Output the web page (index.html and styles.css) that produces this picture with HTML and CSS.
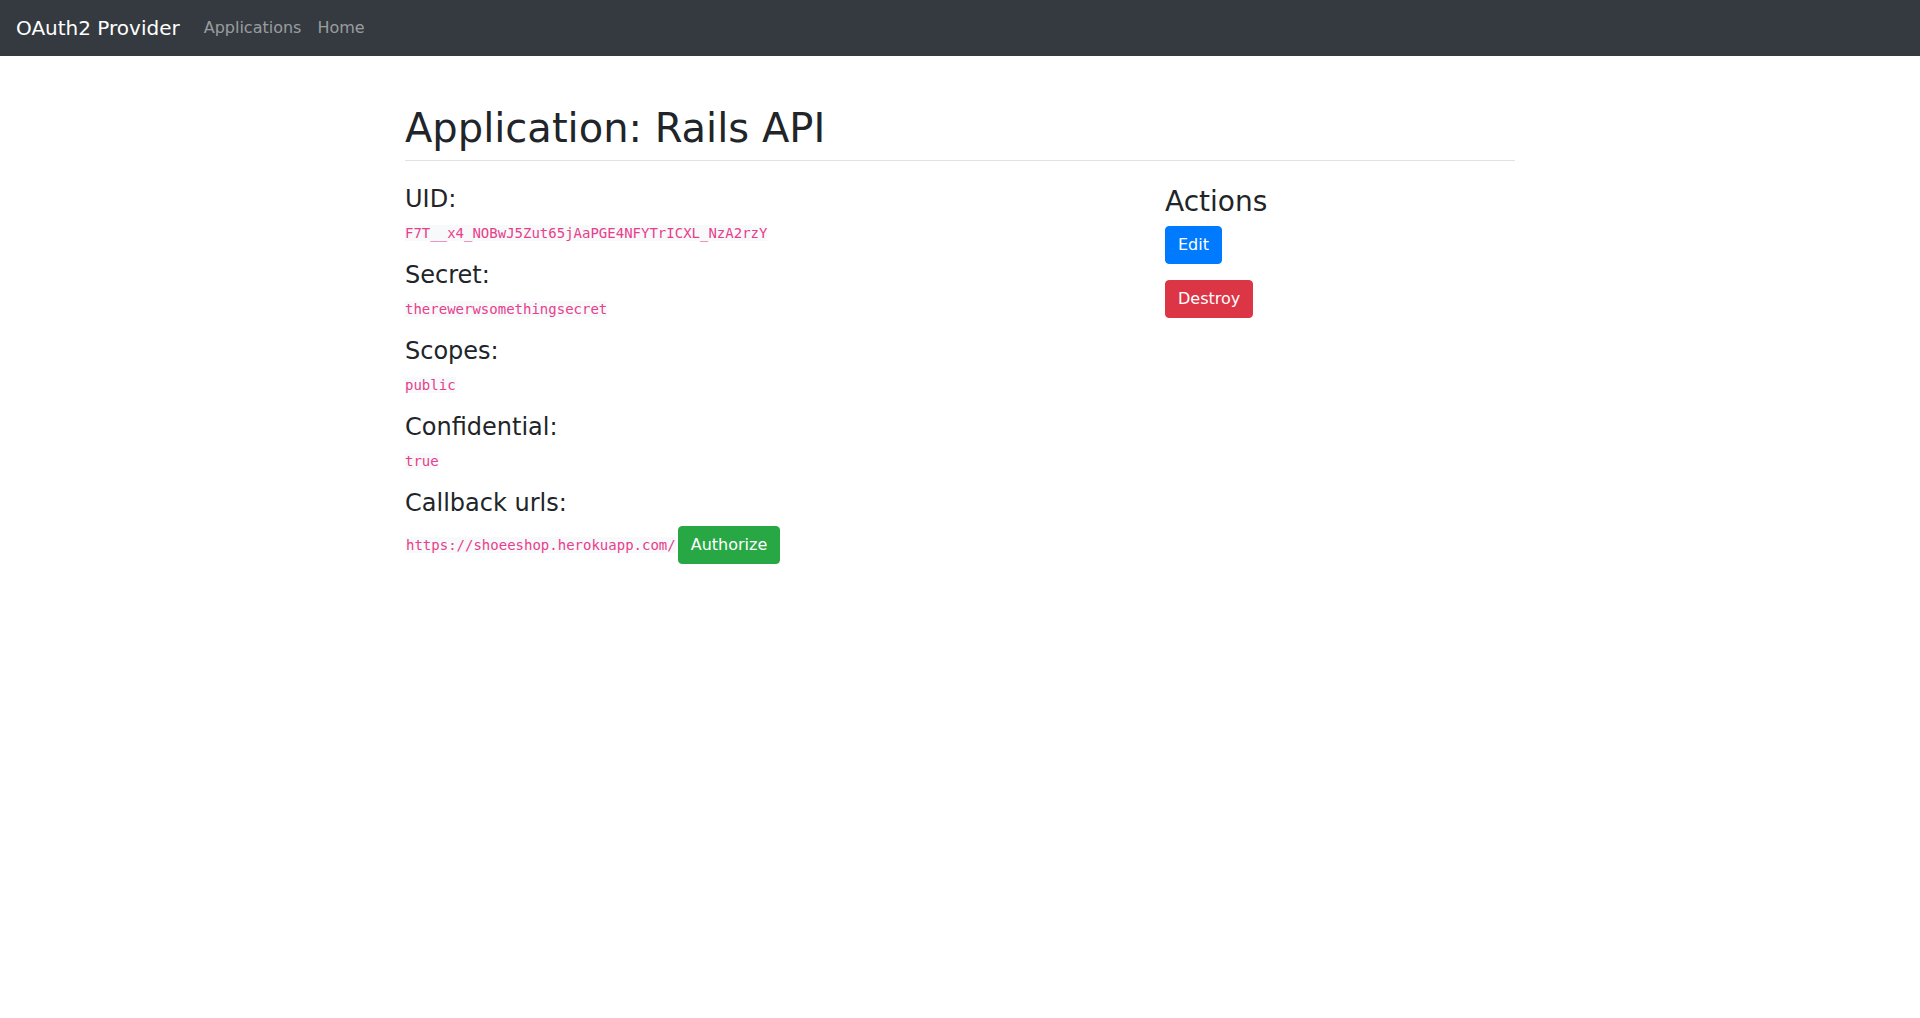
FILE: index.html
```html
<!DOCTYPE html>
<html>
<head>
<meta charset="utf-8">
<title>OAuth2 Provider</title>
<link rel="stylesheet" href="styles.css">
</head>
<body>
<nav class="navbar">
  <a class="brand" href="#">OAuth2 Provider</a>
  <ul class="nav">
    <li><a class="nav-link" href="#">Applications</a></li>
    <li><a class="nav-link" href="#">Home</a></li>
  </ul>
</nav>
<main class="container">
  <div class="page-header">
    <h1>Application: Rails API</h1>
  </div>
  <div class="row">
    <div class="col-main">
      <h4>UID:</h4>
      <p><code>F7T__x4_NOBwJ5Zut65jAaPGE4NFYTrICXL_NzA2rzY</code></p>
      <h4>Secret:</h4>
      <p><code>therewerwsomethingsecret</code></p>
      <h4>Scopes:</h4>
      <p><code>public</code></p>
      <h4>Confidential:</h4>
      <p><code>true</code></p>
      <h4>Callback urls:</h4>
      <table class="callbacks">
        <tr>
          <td><code>https://shoeeshop.herokuapp.com/</code></td>
          <td><form><button type="button" class="btn btn-success">Authorize</button></form></td>
        </tr>
      </table>
    </div>
    <div class="col-side">
      <h3>Actions</h3>
      <p><a class="btn btn-primary" href="#">Edit</a></p>
      <p><form><button type="button" class="btn btn-danger">Destroy</button></form></p>
    </div>
  </div>
</main>
</body>
</html>
```
FILE: styles.css
```css
* { box-sizing: border-box; }
html, body { margin: 0; }
body {
  font-family: "DejaVu Sans", sans-serif;
  font-size: 16px;
  line-height: 1.5;
  color: #212529;
  background: #fff;
}
a { text-decoration: none; }
.navbar {
  display: flex;
  align-items: center;
  background: #343a40;
  padding: 8px 16px;
  margin-bottom: 48px;
}
.brand {
  color: #fff;
  font-size: 20px;
  line-height: 30px;
  padding: 5px 0;
  margin-right: 16px;
}
.nav {
  display: flex;
  list-style: none;
  margin: 0;
  padding: 0;
}
.nav-link {
  display: block;
  color: rgba(255,255,255,.5);
  padding: 8px;
}
.container {
  width: 1140px;
  margin: 0 auto;
  padding: 0 15px;
}
.page-header {
  border-bottom: 1px solid #dee2e6;
  margin-bottom: 24px;
}
h1, h3, h4 {
  font-weight: 500;
  line-height: 1.2;
  margin: 0 0 8px;
}
h1 { font-size: 40px; }
h3 { font-size: 28px; }
h4 { font-size: 24px; margin-bottom: 7.2px; }
p { margin: 0 0 16px; }
form { margin: 0; }
.row {
  display: flex;
  margin: 0 -15px;
}
.col-main { width: 760px; padding: 0 15px; }
.col-side { width: 380px; padding: 0 15px; }
.col-side h3 { margin-bottom: 7px; }
code {
  font-family: "DejaVu Sans Mono", monospace;
  font-size: 14px;
  color: #e83e8c;
  background: #f8f9fa;
  word-wrap: break-word;
}
.callbacks { border-collapse: collapse; }
.callbacks td { padding: 1px; vertical-align: middle; }
.btn {
  display: inline-block;
  font-family: "DejaVu Sans", sans-serif;
  font-size: 16px;
  line-height: 1.5;
  font-weight: 400;
  padding: 6px 12px;
  border: 1px solid transparent;
  border-radius: 4px;
  color: #fff;
  cursor: pointer;
}
.btn-primary { background: #007bff; border-color: #007bff; }
.btn-success { background: #28a745; border-color: #28a745; }
.btn-danger { background: #dc3545; border-color: #dc3545; }
```
